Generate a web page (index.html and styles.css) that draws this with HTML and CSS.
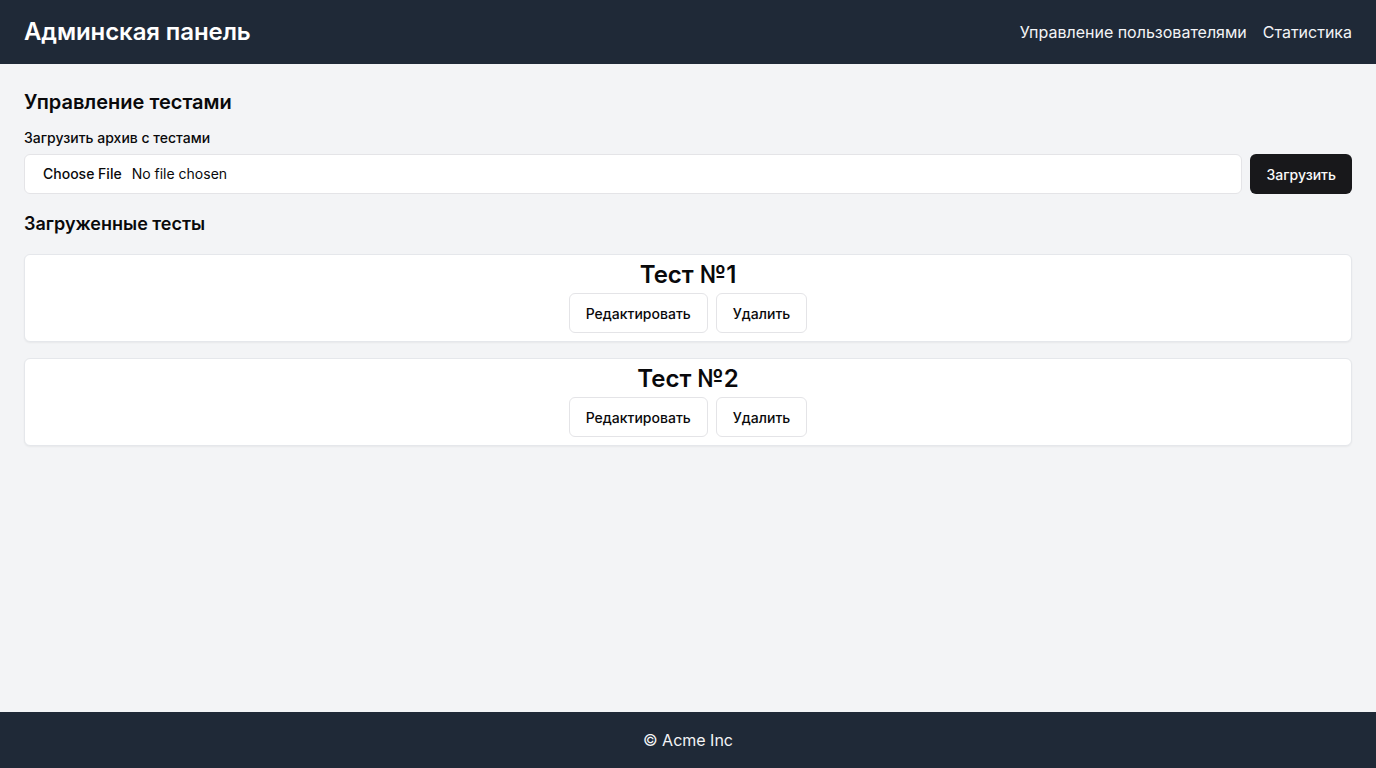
FILE: index.html
```html
<!DOCTYPE html>
<html lang="ru">
<head>
<meta charset="utf-8">
<title>Админская панель</title>
<link rel="stylesheet" href="styles.css">
</head>
<body>
<header class="topbar">
  <h1 class="brand">Админская панель</h1>
  <nav class="nav">
    <a href="#">Управление пользователями</a>
    <a href="#">Статистика</a>
  </nav>
</header>
<main class="main">
  <h2 class="section-title">Управление тестами</h2>
  <label class="label" for="archive">Загрузить архив с тестами</label>
  <div class="upload-row">
    <input class="file-input" id="archive" type="file">
    <button class="btn-primary" type="button">Загрузить</button>
  </div>
  <h3 class="sub-title">Загруженные тесты</h3>
  <div class="list">
    <div class="card">
      <div class="card-title">Тест №1</div>
      <div class="actions">
        <button class="btn-outline" type="button">Редактировать</button>
        <button class="btn-outline" type="button">Удалить</button>
      </div>
    </div>
    <div class="card">
      <div class="card-title">Тест №2</div>
      <div class="actions">
        <button class="btn-outline" type="button">Редактировать</button>
        <button class="btn-outline" type="button">Удалить</button>
      </div>
    </div>
  </div>
</main>
<footer class="footer">© Acme Inc</footer>
</body>
</html>
```
FILE: styles.css
```css
* { box-sizing: border-box; }
html, body { margin: 0; padding: 0; }
body {
  font-family: Inter, "Noto Sans", sans-serif;
  background: #f3f4f6;
  color: #09090b;
  min-height: 100vh;
  display: flex;
  flex-direction: column;
}
.topbar {
  background: #1f2937;
  color: #fff;
  height: 64px;
  padding: 0 24px;
  display: flex;
  align-items: center;
  justify-content: space-between;
}
.brand {
  margin: 0;
  font-size: 24px;
  font-weight: 600;
  line-height: 32px;
  letter-spacing: -0.1px;
}
.nav { display: flex; gap: 16px; }
.nav a {
  color: #f3f4f6;
  text-decoration: none;
  font-size: 16px;
  line-height: 24px;
}
.main {
  flex: 1;
  padding: 24px;
  display: flex;
  flex-direction: column;
}
.section-title {
  margin: 0 0 12px;
  font-size: 20px;
  font-weight: 600;
  line-height: 28px;
}
.label {
  font-size: 14px;
  font-weight: 500;
  line-height: 20px;
  margin-bottom: 6px;
}
.upload-row {
  display: flex;
  gap: 8px;
}
.file-input {
  flex: 1;
  height: 40px;
  border: 1px solid #e4e4e7;
  border-radius: 6px;
  background: #fff;
  padding: 10px 12px 6px;
  font-family: inherit;
  font-size: 14px;
  color: #09090b;
}
.file-input::file-selector-button {
  border: 0;
  background: transparent;
  font-family: inherit;
  font-size: 14px;
  font-weight: 500;
  color: #09090b;
  padding: 0 6px;
  margin-right: 4px;
}
.btn-primary {
  height: 40px;
  padding: 0 16px;
  border: 0;
  border-radius: 6px;
  background: #18181b;
  color: #fafafa;
  font-family: inherit;
  font-size: 14px;
  font-weight: 500;
}
.sub-title {
  margin: 16px 0 0;
  font-size: 18px;
  font-weight: 600;
  line-height: 28px;
}
.list {
  margin-top: 16px;
  display: flex;
  flex-direction: column;
  gap: 16px;
}
.card {
  background: #fff;
  border: 1px solid #e5e7eb;
  border-radius: 6px;
  box-shadow: 0 1px 2px rgba(0,0,0,0.05);
  padding: 4px 8px 8px;
  display: flex;
  flex-direction: column;
  align-items: center;
}
.card-title {
  font-size: 24px;
  font-weight: 600;
  line-height: 32px;
  margin-bottom: 2px;
}
.actions { display: flex; gap: 8px; }
.btn-outline {
  height: 40px;
  padding: 0 16px;
  border: 1px solid #e4e4e7;
  border-radius: 6px;
  background: #fff;
  color: #09090b;
  font-family: inherit;
  font-size: 14px;
  font-weight: 500;
}
.footer {
  background: #1f2937;
  color: #f3f4f6;
  height: 56px;
  display: flex;
  align-items: center;
  justify-content: center;
  font-size: 16px;
}
```
